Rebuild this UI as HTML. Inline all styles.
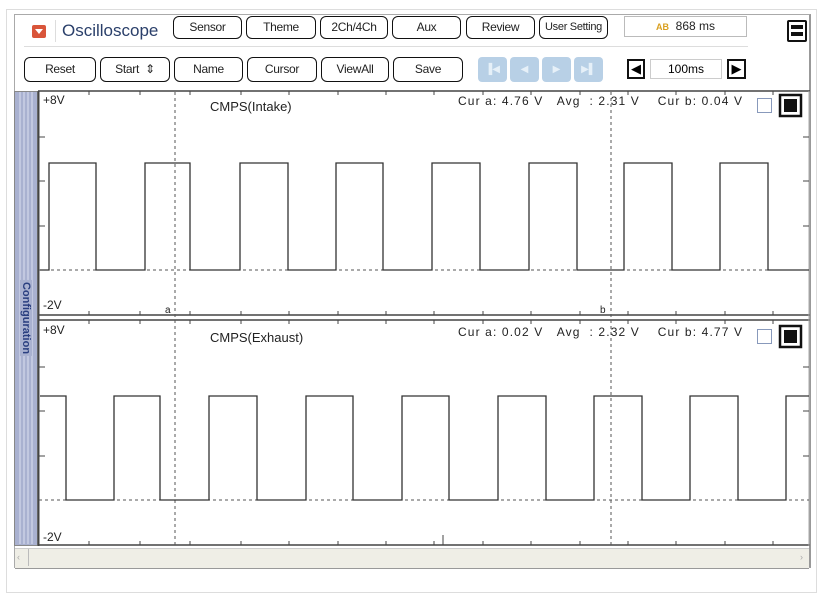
<!DOCTYPE html>
<html><head><meta charset="utf-8"><style>
body{margin:0;width:823px;height:603px;background:#fff;font-family:"Liberation Sans",sans-serif;position:relative;overflow:hidden}
.a{position:absolute}
.b{position:absolute;border:1.5px solid #111;border-radius:6px;background:#fff;font-size:12px;text-align:center;box-sizing:border-box;color:#222;letter-spacing:-0.3px}
.r1{top:16px;height:23px;line-height:20px}
.r2{top:57px;height:25px;line-height:22px}
.bl{position:absolute;top:57px;width:29px;height:25px;background:#b8d0e6;border-radius:4px;color:#e6f0f8;font-size:10px;text-align:center;line-height:25px}
</style></head><body>
<div class="a" style="left:6px;top:9px;width:811px;height:584px;border:1px solid #ddd;box-sizing:border-box"></div>
<div class="a" style="left:14px;top:14px;width:797px;height:554px;border:1px solid #aaa;border-right:2px solid #999;box-sizing:border-box"></div>
<div class="a" style="left:32px;top:25px;width:14px;height:13px;background:#d9553a;border-radius:2px"></div>
<div class="a" style="left:35px;top:29px;width:0;height:0;border-left:4px solid transparent;border-right:4px solid transparent;border-top:5px solid #fff"></div>
<div class="a" style="left:55px;top:20px;width:1px;height:22px;background:#ddd"></div>
<div class="a" style="left:62px;top:21px;font-size:17px;color:#2a3f6a">Oscilloscope</div>
<div class="b r1" style="left:173px;width:69px">Sensor</div>
<div class="b r1" style="left:246px;width:70px">Theme</div>
<div class="b r1" style="left:320px;width:68px">2Ch/4Ch</div>
<div class="b r1" style="left:392px;width:69px">Aux</div>
<div class="b r1" style="left:466px;width:69px">Review</div>
<div class="b r1" style="left:539px;width:69px;font-size:11px">User Setting</div>
<div class="a" style="left:624px;top:16px;width:123px;height:21px;border:1px solid #bbb;box-sizing:border-box;font-size:12px;line-height:19px;text-align:center;color:#222"><span style="color:#d9a020;font-size:9px;font-weight:bold">AB</span>&nbsp; 868 ms</div>
<div class="a" style="left:787px;top:20px;width:20px;height:22px;border:2px solid #111;box-sizing:border-box;border-radius:2px"><div style="margin:3px 2px;height:4px;background:#111"></div><div style="margin:2px 2px;height:4px;background:#111"></div></div>
<div class="a" style="left:24px;top:46px;width:724px;height:1px;background:#ddd"></div>
<div class="b r2" style="left:24px;width:72px">Reset</div>
<div class="b r2" style="left:100px;width:70px">Start &nbsp;⇕</div>
<div class="b r2" style="left:174px;width:69px">Name</div>
<div class="b r2" style="left:247px;width:70px">Cursor</div>
<div class="b r2" style="left:321px;width:68px">ViewAll</div>
<div class="b r2" style="left:393px;width:70px">Save</div>
<div class="bl" style="left:478px">▐◀</div><div class="bl" style="left:510px">◀</div><div class="bl" style="left:542px">▶</div><div class="bl" style="left:574px">▶▌</div>
<div class="a" style="left:627px;top:59px;width:18px;height:20px;border:2px solid #111;box-sizing:border-box;font-size:13px;line-height:16px;text-align:center">◀</div>
<div class="a" style="left:650px;top:59px;width:72px;height:20px;border:1px solid #ccc;box-sizing:border-box;font-size:12px;line-height:18px;text-align:center">100ms</div>
<div class="a" style="left:727px;top:59px;width:19px;height:20px;border:2px solid #111;box-sizing:border-box;font-size:13px;line-height:16px;text-align:center">▶</div>
<div class="a" style="left:14px;top:91px;width:24px;height:455px;background:#a9b1d0;border:1px solid #888;box-sizing:border-box"></div>
<div class="a" style="left:17px;top:92px;width:16px;height:452px;background:repeating-linear-gradient(90deg,#a9b1d0 0 2px,#c2c8e0 2px 4px)"></div>
<div class="a" style="left:26px;top:318px;transform:translate(-50%,-50%) rotate(90deg);font-size:11px;font-weight:bold;color:#2a3f80;background:#a9b1d0;padding:0 2px;white-space:nowrap">Configuration</div>
<svg class="a" style="left:0;top:0" width="823" height="603">
<g stroke="#444" fill="none">
<line x1="38" y1="91" x2="810" y2="91" stroke-width="1.5"/>
<line x1="38.5" y1="91" x2="38.5" y2="546" stroke-width="2"/>
<line x1="38" y1="315" x2="810" y2="315" stroke-width="1.5"/>
<line x1="38" y1="320" x2="810" y2="320" stroke-width="1.5"/>
<line x1="38" y1="545" x2="810" y2="545" stroke-width="1.5"/>
<line x1="809" y1="91" x2="809" y2="546" stroke="#aaa"/>
<path d="M39 137h6M39 181h6M39 226h6M39 367h6M39 411h6M39 456h6M809 137h-6M809 181h-6M809 226h-6M809 367h-6M809 411h-6M809 456h-6"/>
<path d="M89 91v4M140 91v4M190 91v4M241 91v4M289 91v4M338 91v4M386 91v4M434 91v4M483 91v4M531 91v4M580 91v4M628 91v4M676 91v4M725 91v4M773 91v4
M89 315v-4M140 315v-4M190 315v-4M241 315v-4M289 315v-4M338 315v-4M386 315v-4M434 315v-4M483 315v-4M531 315v-4M580 315v-4M628 315v-4M676 315v-4M725 315v-4M773 315v-4
M89 320v4M140 320v4M190 320v4M241 320v4M289 320v4M338 320v4M386 320v4M434 320v4M483 320v4M531 320v4M580 320v4M628 320v4M676 320v4M725 320v4M773 320v4
M89 545v-4M140 545v-4M190 545v-4M241 545v-4M289 545v-4M338 545v-4M386 545v-4M434 545v-4M483 545v-4M531 545v-4M580 545v-4M628 545v-4M676 545v-4M725 545v-4M773 545v-4M443 545v-10"/>
<g stroke-dasharray="3,3" stroke="#555">
<line x1="175" y1="92" x2="175" y2="545"/><line x1="611" y1="92" x2="611" y2="545"/>
<line x1="39" y1="270" x2="809" y2="270"/><line x1="39" y1="500" x2="809" y2="500"/>
</g>
<path stroke="#333" stroke-width="1.3" d="M40 270H49V163H96V270H145V163H190V270H240V163H288V270H336V163H383V270H432V163H480V270H529V163H577V270H624V163H672V270H720V163H768V270H809"/>
<path stroke="#333" stroke-width="1.3" d="M40 396H66V500H114V396H160V500H209V396H257V500H306V396H353V500H402V396H449V500H498V396H546V500H594V396H642V500H690V396H738V500H786V396H809"/>
</g>
<g font-family="Liberation Sans,sans-serif" fill="#222" font-size="12">
<text x="43" y="104">+8V</text><text x="43" y="309">-2V</text>
<text x="43" y="334">+8V</text><text x="43" y="541">-2V</text>
<text x="165" y="313" font-size="10">a</text><text x="600" y="313" font-size="10">b</text>
<text x="210" y="111" font-size="13">CMPS(Intake)</text>
<text x="210" y="342" font-size="13">CMPS(Exhaust)</text>
<text x="458" y="105" textLength="284" lengthAdjust="spacing">Cur a: 4.76 V&#160;&#160;&#160;Avg&#160;&#160;: 2.31 V&#160;&#160;&#160;&#160;Cur b: 0.04 V</text>
<text x="458" y="336" textLength="284" lengthAdjust="spacing">Cur a: 0.02 V&#160;&#160;&#160;Avg&#160;&#160;: 2.32 V&#160;&#160;&#160;&#160;Cur b: 4.77 V</text>
</g>
<rect x="757.5" y="98.5" width="14" height="14" fill="#fff" stroke="#8899bb"/>
<rect x="780" y="95" width="21" height="21" fill="#fff" stroke="#111" stroke-width="2.5"/><rect x="784" y="99" width="13" height="13" fill="#111"/>
<rect x="757.5" y="329.5" width="14" height="14" fill="#fff" stroke="#8899bb"/>
<rect x="780" y="326" width="21" height="21" fill="#fff" stroke="#111" stroke-width="2.5"/><rect x="784" y="330" width="13" height="13" fill="#111"/>
</svg>
<div class="a" style="left:15px;top:548px;width:794px;height:19px;background:#efeee6;border-top:1px solid #ccc;border-bottom:1px solid #999"></div>
<div class="a" style="left:28px;top:549px;width:1px;height:17px;background:#bbb"></div>
<div class="a" style="left:17px;top:552px;font-size:9px;color:#aaa">‹</div>
<div class="a" style="left:800px;top:552px;font-size:9px;color:#aaa">›</div>
</body></html>
